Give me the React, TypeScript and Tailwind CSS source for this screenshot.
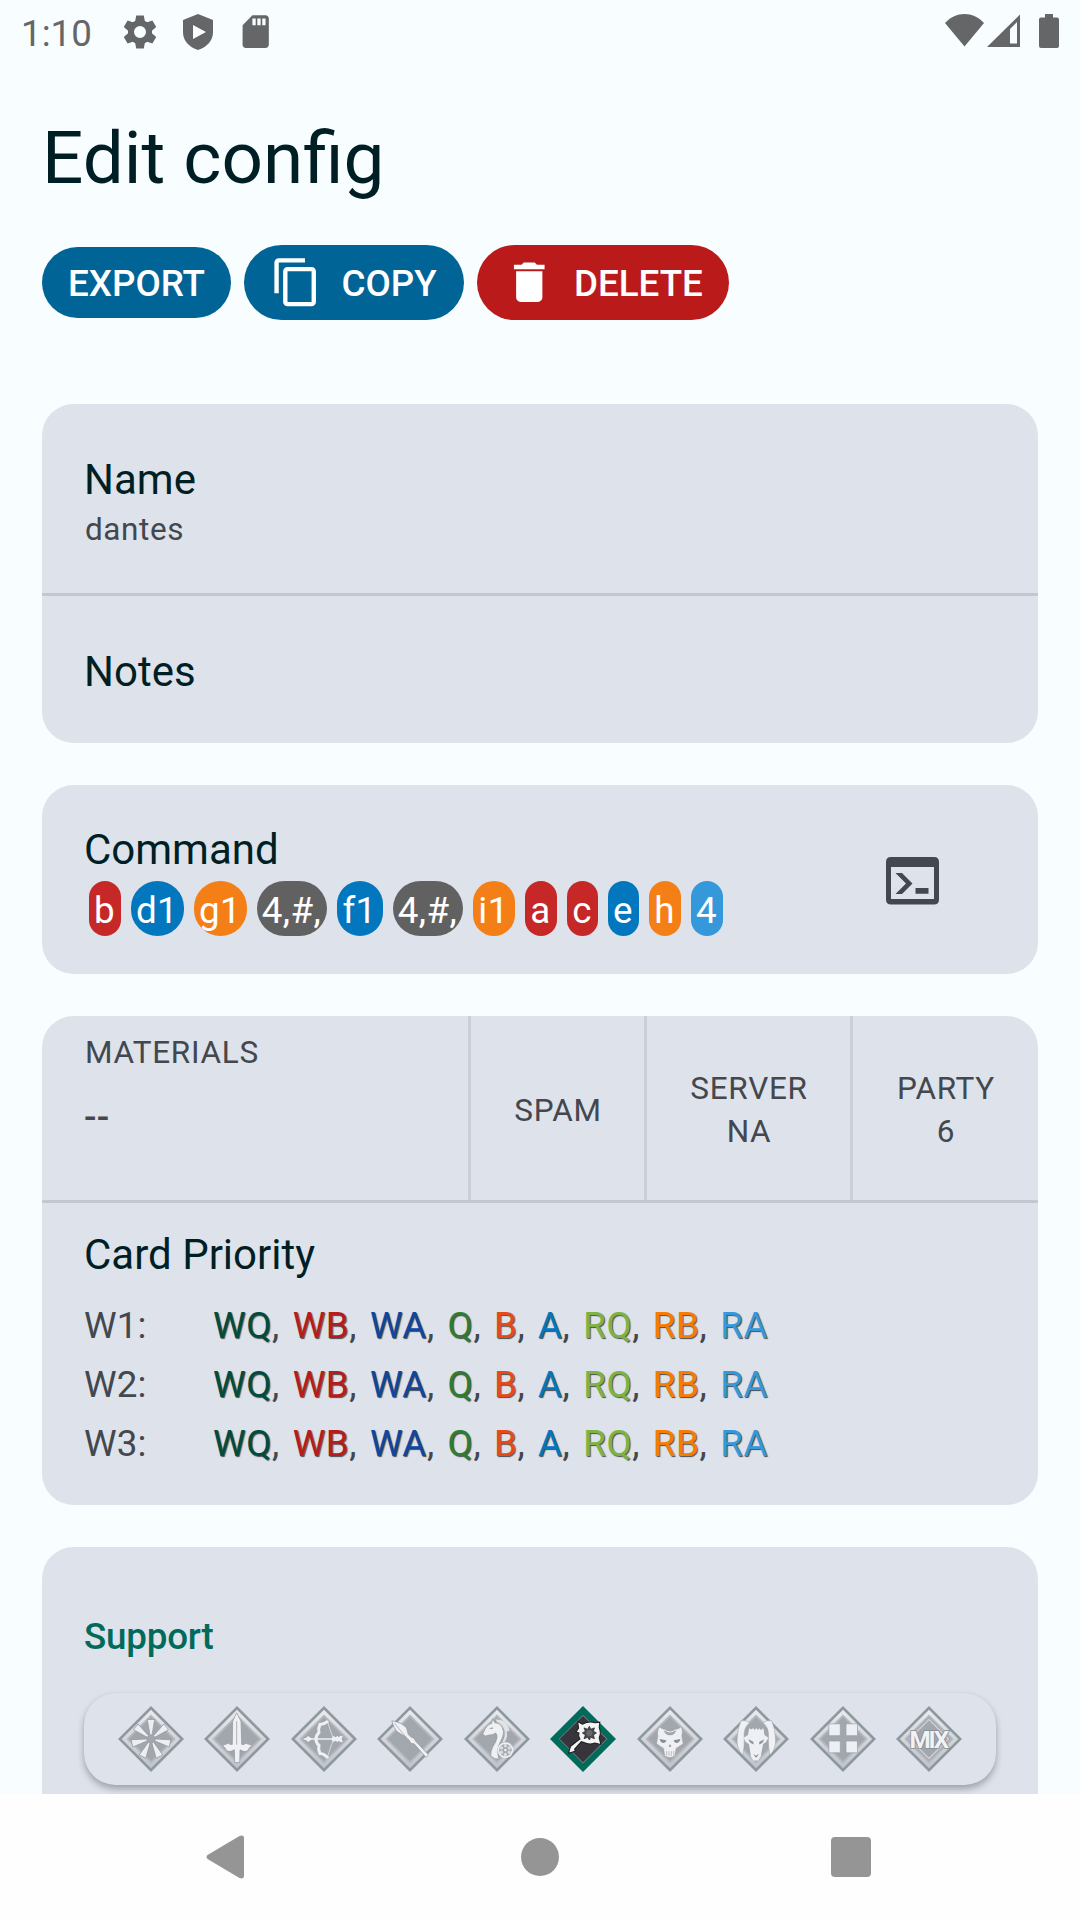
import type { ReactNode } from "react";
import { MdContentCopy, MdDelete, MdSdCard } from "react-icons/md";

const chips = [
  { text: "b", style: "w-[32px] bg-[#c62828]" },
  { text: "d1", style: "w-[53px] bg-[#0277bd]" },
  { text: "g1", style: "w-[53px] bg-[#f57f17]" },
  { text: "4,#,", style: "w-[70px] bg-[#616161]" },
  { text: "f1", style: "w-[46px] bg-[#0277bd]" },
  { text: "4,#,", style: "w-[70px] bg-[#616161]" },
  { text: "i1", style: "w-[42px] bg-[#f57f17]" },
  { text: "a", style: "w-[32px] bg-[#c62828]" },
  { text: "c", style: "w-[31px] bg-[#c62828]" },
  { text: "e", style: "w-[31px] bg-[#0277bd]" },
  { text: "h", style: "w-[32px] bg-[#f57f17]" },
  { text: "4", style: "w-[32px] bg-[#3498db]" },
];

const priorities = [
  { text: "WQ", color: "text-[#004d40]" },
  { text: "WB", color: "text-[#b71c1c]" },
  { text: "WA", color: "text-[#0d47a1]" },
  { text: "Q", color: "text-[#2e7d32]" },
  { text: "B", color: "text-[#e64a19]" },
  { text: "A", color: "text-[#0277bd]" },
  { text: "RQ", color: "text-[#7cb342]" },
  { text: "RB", color: "text-[#f57c00]" },
  { text: "RA", color: "text-[#3498db]" },
];

function StatusBar() {
  return (
    <header className="flex h-[63px] items-start text-[#646668]">
      <div className="ml-[21px] mt-[4px] w-[76px] text-[36.75px] leading-[60px]">1:10</div>
      <svg className="ml-[26px] mt-[15px] size-[34px]" viewBox="-17 -17 34 34">
        <circle r="9" fill="none" stroke="currentColor" strokeWidth="6" />
        {[0, 60, 120, 180, 240, 300].map((a) => (
          <path key={a} fill="currentColor" d="M-3.800-16.500H3.800L4.800-11 7-9-7-9-4.800-11Z" transform={`rotate(${a})`} />
        ))}
      </svg>
      <svg className="ml-[25.500px] mt-[14px] h-[36px] w-[30px]" viewBox="0 0 30 36">
        <path fill="currentColor" fillRule="evenodd" d="M15 0 30 6v12c0 9-6 15-15 18C6 33 0 27 0 18V6ZM10 11v14l13-7Z" />
      </svg>
      <MdSdCard className="ml-[23.500px] mt-[12px] size-[39.4px]" />
      <div className="ml-auto mr-[21px] mt-[14px] flex">
        <svg className="h-[34px] w-[39px]" viewBox="0 0 39 34">
          <path fill="currentColor" d="M0 9C11-3 28-3 39 9L19.5 32.5Z" />
        </svg>
        <svg className="ml-[3px] h-[34px] w-[33px]" viewBox="0 0 33 34">
          <path fill="currentColor" fillRule="evenodd" d="M33 .5V33H0ZM30 8l-7 7v14.500h7Z" />
        </svg>
        <svg className="ml-[19px] h-[34px] w-[20px]" viewBox="0 0 20 34">
          <path fill="currentColor" d="M6 0h8v3.500h4q2 0 2 2V32q0 2-2 2H2q-2 0-2-2V5.500q0-2 2-2h4Z" />
        </svg>
      </div>
    </header>
  );
}

function Card({ className, children }: { className: string; children: ReactNode }) {
  return <section className={`mx-[42px] overflow-hidden rounded-[31.5px] bg-[#dee2ea] ${className}`}>{children}</section>;
}

function Heading({ children }: { children: ReactNode }) {
  return <div className="text-[42px] leading-[58px] text-[#001f25]">{children}</div>;
}

function TerminalIcon() {
  return (
    <svg className="mt-[2px] h-[48px] w-[53px] text-[#43474e]" viewBox="0 0 53 48" fill="currentColor">
      <path fillRule="evenodd" d="M5 0h43q5 0 5 5v37.500q0 5-5 5H5q-5 0-5-5V5q0-5 5-5ZM5 10v32h43V10Z" />
      <path d="M9.500 16h6.500l10.500 10.500L16 37H9.500L20 26.500ZM29.500 31H42.500v5.700H29.500Z" />
    </svg>
  );
}

function Frame({ id, children }: { id: string; children: ReactNode }) {
  return (
    <svg className="size-[66px]" viewBox="0 0 196 196">
      <defs>
        <linearGradient id={id} x1="0" y1="0" x2="0" y2="1">
          <stop offset="0" stopColor="#e9ebee" />
          <stop offset="0.5" stopColor="#d3d6db" />
          <stop offset="1" stopColor="#bfc4ca" />
        </linearGradient>
      </defs>
      <path fill="#8e989f" d="M98 0 196 98 98 196 0 98Z" />
      <path fill={`url(#${id})`} d="M98 11 185 98 98 185 11 98Z" />
      <path fill="#b4b8be" d="M98 25 171 98 98 171 25 98Z" />
      <path fill="#a2a6ad" d="M98 33 163 98 98 163 33 98Z" />
      {children}
    </svg>
  );
}

function ClassIcons() {
  return (
    <div className="flex items-center justify-between">
      <Frame id="all">
        {[0, 1, 2, 3, 4, 5, 6].map((i) => (
          <path key={i} fill="#eceef1" stroke="#8f949b" strokeWidth="2" d="M95 86 87 40h22l-8 46Z" transform={`rotate(${i * 51.43} 98 98)`} />
        ))}
      </Frame>
      <Frame id="saber">
        <g fill="#eef0f3" stroke="#8f949b" strokeWidth="2">
          <path d="M97 20 110 46 112 114h7q4-6 12-1 9 2 11 6-8 3-11 12-8 9-24-1l-1 38H91l-1-38q-16 10-24 1-3-9-11-12 3-4 11-6 8-5 12 1h6L85 46Z" />
          <path fill="none" d="M97 45v70" />
        </g>
      </Frame>
      <Frame id="archer">
        <g fill="none" stroke="#eef0f3">
          <path strokeWidth="9" d="M110 45q-10 9-24 10-6 12-3 24-9 8-9 19 0 11 9 19-3 12 3 24 14 1 24 14" />
          <path strokeWidth="2" d="M108 46 126 98l-18 54" />
          <path strokeWidth="4" d="M40 98h110" />
        </g>
        <path fill="#eef0f3" d="M35 98q10-2 16-9l12 9-12 9q-6-7-16-9ZM125 89l8 4 5-5 4 5 5-5 7 2-4 8 4 8-7 2-5-5-4 5-5-5-8 4-5-9Z" />
      </Frame>
      <Frame id="lancer">
        <path fill="#eef0f3" stroke="#8f949b" strokeWidth="2" d="M44 44q28 4 44 21l5 20q4 4 10 8 10 3 12 12l38 40-7 8-36-41q-12 1-14-10-7-5-10-10l-24-14q-12-10-18-34Z" />
        <path stroke="#9ca0a7" strokeWidth="2" d="m52 51 35 43" />
      </Frame>
      <Frame id="rider">
        <path
          fill="#eef0f3"
          stroke="#8f949b"
          strokeWidth="2"
          d="M85 38 92 50Q106 50 113 62 121 76 115 92 108 106 103 118 97 134 104 158 90 158 80 149 78 136 85 122 96 106 98 94 99 84 94 80 86 87 76 86L65 89Q58 90 56 82 63 66 70 58 76 54 82 52Z"
        />
        <path fill="#dfe2e6" d="M94 40Q120 38 131 60L136 76Q130 72 127 78 131 92 120 108L114 106Q124 90 120 72 114 54 97 47Z" />
        <path fill="#8f949b" d="m74 67 10-4 2 5Z" />
        <circle cx="123" cy="131" r="21" fill="#a2a6ad" stroke="#eef0f3" strokeWidth="5" />
        {[0, 60, 120, 180, 240, 300].map((a) => (
          <circle key={a} cx="123" cy="118" r="5" fill="#d9dce1" transform={`rotate(${a} 123 131)`} />
        ))}
        <circle cx="123" cy="131" r="4" fill="#eef0f3" />
      </Frame>
      <svg className="size-[66px]" viewBox="0 0 196 196">
        <path fill="#006b5b" d="M98 0 196 98 98 196 0 98Z" />
        <path fill="#77787c" d="M98 26 171 98 98 171 26 98Z" />
        <path fill="#36353b" d="M98 30 167 98 98 167 29 98Z" />
        <path
          fill="#f4f4f4"
          stroke="#1d1c20"
          strokeWidth="3"
          d="m82 46 14 8q20-10 38-4l14-2-2 16q7 16 0 30l5 20-18-4q-14 6-28 0l-12-4-20 22 2 6-20 6 6-20 28-22q-6-8-3-18l-9-2 8-12Z"
        />
        <path fill="#4b4b50" stroke="#1d1c20" strokeWidth="2" d="m117 60 4 9 11-4-3 10 9 5-9 6 3 11-11-4-4 8-5-8-11 4 4-11-9-6 9-5-4-10 11 4Z" />
        <circle cx="117" cy="80" r="9" fill="#68686d" />
      </svg>
      <Frame id="assassin">
        <path fill="#eef0f3" stroke="#999da4" strokeWidth="1.500" d="M68 62q6 7 12 6 2 18 18 18t18-18q8 1 14-6 8 10 3 27l4 23-21 14-3 21q-15 12-31 0l-3-21-21-14 4-23q-4-17 6-27Z" />
        <path fill="none" stroke="#eef0f3" strokeWidth="3" d="M80 70q18 14 36 0" />
        <path fill="#8a8f96" d="m67 98 20 4q-1 9-9 8-9-2-11-12ZM129 98l-20 4q1 9 9 8 9-2 11-12ZM98 113l4 8h-8Z" />
        <path stroke="#a2a6ad" strokeWidth="2" d="M88 134v12m7-12v14m7-14v14m7-14v12" />
      </Frame>
      <Frame id="berserker">
        <path
          fill="#eef0f3"
          stroke="#999da4"
          strokeWidth="1.500"
          d="M53 44q14-4 26 6-18 14-16 42 2 22-4 54-20-20-17-50 1-28 11-52ZM145 44q-14-4-26 6 18 14 16 42-2 22 4 54 20-20 17-50-1-28-11-52Z"
        />
        <path fill="#eef0f3" d="M78 66l7 4 4-5 5 6 5-6 4 6 6-5 3 5 8-5 3 20 12 8-8 14-8 5-7 37-8 12H90l-7-12-6-37-9-5-7-14 13-8Z" />
        <path fill="#8f949b" d="m76 99 14 7 1 8q-13-3-15-15ZM122 99l-14 7-1 8q13-3 15-15ZM90 142l8 6 9-6-6 10h-5Z" />
      </Frame>
      <Frame id="extra">
        <g fill="#eceff4" stroke="#989da5" strokeWidth="2">
          <path d="M56 53h34v35H56ZM107 53h34v35h-34ZM56 104h34v35H56ZM107 104h34v35h-34Z" />
        </g>
      </Frame>
      <Frame id="mix">
        <path fill="none" stroke="#cdd1d6" strokeWidth="4" d="M98 40 156 98 98 156 40 98Z" />
        <text
          x="96"
          y="126"
          className="[paint-order:stroke]"
          textAnchor="middle"
          fill="#f0f2f4"
          stroke="#8a8f96"
          strokeWidth="5"
          fontFamily="Roboto, sans-serif"
          fontWeight="700"
          fontSize="72"
          letterSpacing="-6"
        >
          MIX
        </text>
      </Frame>
    </div>
  );
}

export default function App() {
  return (
    <div className="flex h-[1920px] w-[1080px] flex-col overflow-hidden bg-[#f8fdff] font-['Roboto',sans-serif] text-[#43474e]">
      <StatusBar />
      <main className="flex min-h-0 flex-1 flex-col overflow-hidden">
        <h1 className="ml-[42px] mt-[53px] shrink-0 text-[72.8px] leading-[84px] text-[#001f25]">Edit config</h1>

        <div className="ml-[42px] mt-[45px] flex h-[75px] shrink-0 items-center gap-[13px] text-[36.75px] font-medium text-white">
          <button className="h-[71px] w-[189px] rounded-full bg-[#006497] pt-[3px]">EXPORT</button>
          <button className="flex h-[75px] w-[220px] items-center rounded-full bg-[#006497] pl-[26px]">
            <MdContentCopy className="mr-[19px] size-[52.5px]" />
            <span className="pt-[3px]">COPY</span>
          </button>
          <button className="flex h-[75px] w-[252px] items-center rounded-full bg-[#ba1a1a] pl-[26px]">
            <MdDelete className="mr-[18.5px] size-[52.5px]" />
            <span className="pt-[3px]">DELETE</span>
          </button>
        </div>

        <Card className="mt-[84px] h-[339px] shrink-0">
          <div className="h-[192px] border-b-[3px] border-[#c3c7cf] pl-[42px] pt-[47px]">
            <Heading>Name</Heading>
            <div className="ml-px mt-px text-[31.5px] leading-[40px] tracking-[0.6px]">dantes</div>
          </div>
          <div className="pl-[42px] pt-[47px]">
            <Heading>Notes</Heading>
          </div>
        </Card>

        <Card className="mt-[42px] flex h-[189px] shrink-0 items-center justify-between pl-[42px] pr-[99px]">
          <div className="h-[117px]">
            <Heading>Command</Heading>
            <div className="ml-[5px] mt-[2px] flex gap-[10px]">
              {chips.map((chip, i) => (
                <span key={i} className={`flex h-[55px] justify-center rounded-full pr-px pt-[2px] text-[36.75px] leading-[55px] tracking-[0.4px] text-white ${chip.style}`}>
                  {chip.text}
                </span>
              ))}
            </div>
          </div>
          <TerminalIcon />
        </Card>

        <Card className="mt-[42px] h-[489px] shrink-0">
          <div className="flex h-[187px] border-b-[3px] border-[#c3c7cf] text-center text-[31.5px] leading-[43px] tracking-[0.7px]">
            <div className="w-[429px] border-r-[3px] border-[#cbcfd7] pl-[43px] pt-[15px] text-left">
              <div>MATERIALS</div>
              <div className="-ml-px mt-[22px] text-[36.75px] font-medium tracking-[0.3px]">--</div>
            </div>
            <div className="flex w-[176px] items-center justify-center border-r-[3px] border-[#cbcfd7] pl-px pt-[4px]">SPAM</div>
            <div className="flex w-[206px] flex-col items-center justify-center border-r-[3px] border-[#cbcfd7] pl-px pt-[4px]">
              <div>SERVER</div>
              <div>NA</div>
            </div>
            <div className="flex flex-1 flex-col items-center justify-center pl-px pt-[4px]">
              <div>PARTY</div>
              <div>6</div>
            </div>
          </div>
          <div className="pl-[42px] pt-[23px]">
            <Heading>Card Priority</Heading>
            <div className="mt-[12px] text-[36.75px] leading-[59px] tracking-[0.6px]">
              {["W1:", "W2:", "W3:"].map((wave) => (
                <div key={wave} className="flex">
                  <span className="w-[129px] tracking-[0.1px]">{wave}</span>
                  <span className="[word-spacing:3px]">
                    {priorities.map((p, i) => (
                      <span key={p.text}>
                        <span className={`[text-shadow:1px_1px_1px_#000000aa] ${p.color}`}>{p.text}</span>
                        {i < priorities.length - 1 && ", "}
                      </span>
                    ))}
                  </span>
                </div>
              ))}
            </div>
          </div>
        </Card>

        <Card className="mt-[42px] h-[300px] shrink-0 px-[42px] pt-[68px]">
          <div className="text-[36.75px] font-medium leading-[44px] tracking-[-0.2px] text-[#006b5b]">Support</div>
          <div className="mt-[34px] h-[92px] rounded-[31.5px] bg-[#dee2ea] px-[34px] pt-[13px] shadow-[0_4px_7px_#00000048,0_0_1px_#00000018]">
            <ClassIcons />
          </div>
        </Card>
      </main>

      <nav className="flex h-[126px] items-center bg-[#fefefe] text-[#959595]">
        <svg className="ml-[206px] h-[44px] w-[38px]" viewBox="0 0 38 44" fill="currentColor">
          <path d="M1.500 20 33.500 1Q38-.5 38 3v38q0 3.500-4.500 2L1.500 24Q-.5 22 1.500 20Z" />
        </svg>
        <div className="ml-[277px] size-[38px] rounded-full bg-[#959595]" />
        <div className="ml-[272px] size-[40px] rounded-[4px] bg-[#959595]" />
      </nav>
    </div>
  );
}
